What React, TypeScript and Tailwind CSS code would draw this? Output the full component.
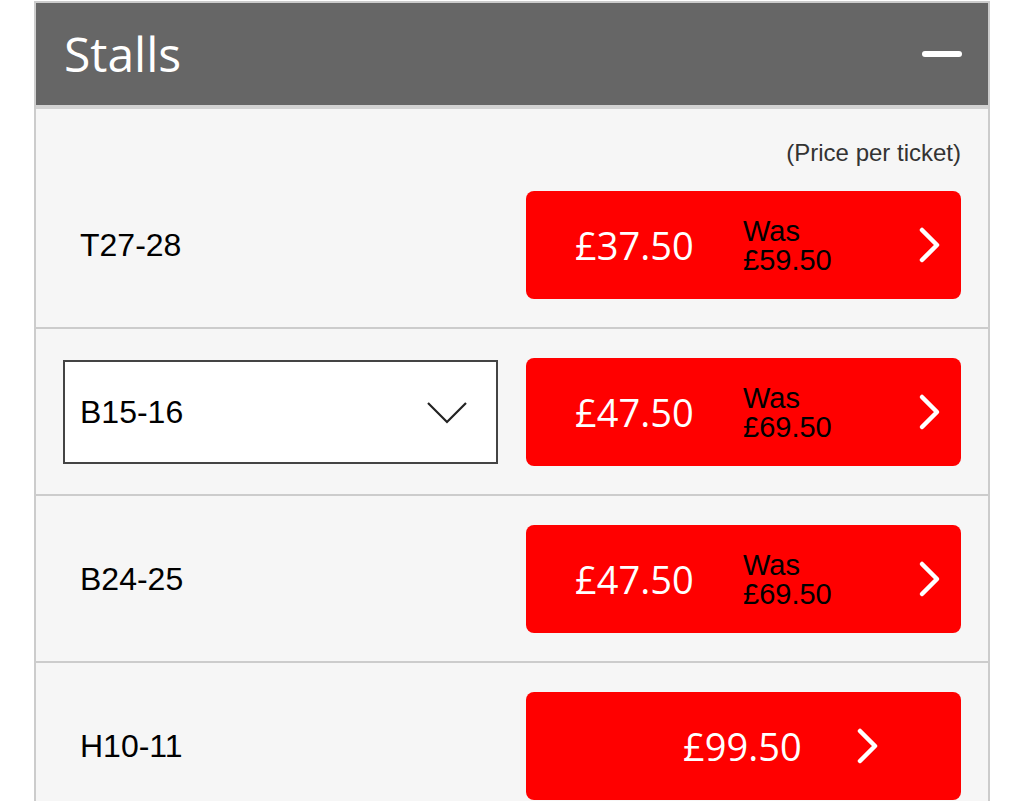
import React from "react";

type Seat = {
  seats: string;
  price: string;
  was?: string;
  select?: boolean;
};

const seats: Seat[] = [
  { seats: "T27-28", price: "£37.50", was: "£59.50" },
  { seats: "B15-16", price: "£47.50", was: "£69.50", select: true },
  { seats: "B24-25", price: "£47.50", was: "£69.50" },
  { seats: "H10-11", price: "£99.50" },
];

function ChevronRight() {
  return (
    <svg width="27" height="38" viewBox="0 0 27 38" fill="none">
      <path d="M6 4 L21 19 L6 34" stroke="white" strokeWidth="4.5" strokeLinecap="round" strokeLinejoin="round" />
    </svg>
  );
}

function ChevronDown() {
  return (
    <svg width="42" height="24" viewBox="0 0 42 24" fill="none">
      <path d="M2 3 L21 22 L40 3" stroke="#222" strokeWidth="2.2" />
    </svg>
  );
}

function PriceButton({ seat }: { seat: Seat }) {
  if (!seat.was) {
    return (
      <button className="flex h-[108px] w-full items-center rounded-[8px] bg-[#ff0000] pl-[157px] text-left">
        <span className="font-['Open_Sans',sans-serif] text-[38px] leading-none text-white">{seat.price}</span>
        <span className="ml-[52px]">
          <ChevronRight />
        </span>
      </button>
    );
  }
  return (
    <button className="flex h-[108px] w-full items-center rounded-[8px] bg-[#ff0000] pl-[49px] pr-[18px] text-left">
      <span className="w-[168px] font-['Open_Sans',sans-serif] text-[38px] leading-none text-white">{seat.price}</span>
      <span className="flex flex-col pt-[2px] font-['Liberation_Sans',Arial,sans-serif] text-[29px] leading-[29px] text-black">
        <span>Was</span>
        <span>{seat.was}</span>
      </span>
      <span className="ml-auto">
        <ChevronRight />
      </span>
    </button>
  );
}

function SeatRow({ seat, first }: { seat: Seat; first?: boolean }) {
  return (
    <div className={first ? "px-[27px] pt-[30px] pb-[28px]" : "border-t-2 border-[#cccccc] px-[27px] pt-[29px] pb-[28px]"}>
      {first && (
        <div className="mb-[24px] text-right font-['Liberation_Sans',Arial,sans-serif] text-[24px] leading-[28px] text-[#333333]">
          (Price per ticket)
        </div>
      )}
      <div className="grid grid-cols-2 items-center gap-[28px]">
        {seat.select ? (
          <div className="flex h-[104px] items-center justify-between border-2 border-[#444444] bg-white pl-[15px] pr-[28px]">
            <span className="font-['Liberation_Sans',Arial,sans-serif] text-[32px] text-black">{seat.seats}</span>
            <ChevronDown />
          </div>
        ) : (
          <div className="pl-[17px] font-['Liberation_Sans',Arial,sans-serif] text-[32px] text-black">{seat.seats}</div>
        )}
        <PriceButton seat={seat} />
      </div>
    </div>
  );
}

export default function App() {
  return (
    <div className="h-[801px] w-[1024px] overflow-hidden bg-white">
      <div className="ml-[34px] mt-[1px] w-[956px] border-2 border-[#cccccc] bg-[#f6f6f6]">
        <div className="flex h-[106px] items-center justify-between border-b-4 border-[#d2d2d2] bg-[#666666] pl-[28px] pr-[26px]">
          <h2 className="font-['Open_Sans',sans-serif] text-[48px] leading-none text-white">Stalls</h2>
          <span className="block h-[6px] w-[40px] rounded-full bg-white" />
        </div>
        {seats.map((s, i) => (
          <SeatRow key={s.seats} seat={s} first={i === 0} />
        ))}
      </div>
    </div>
  );
}
